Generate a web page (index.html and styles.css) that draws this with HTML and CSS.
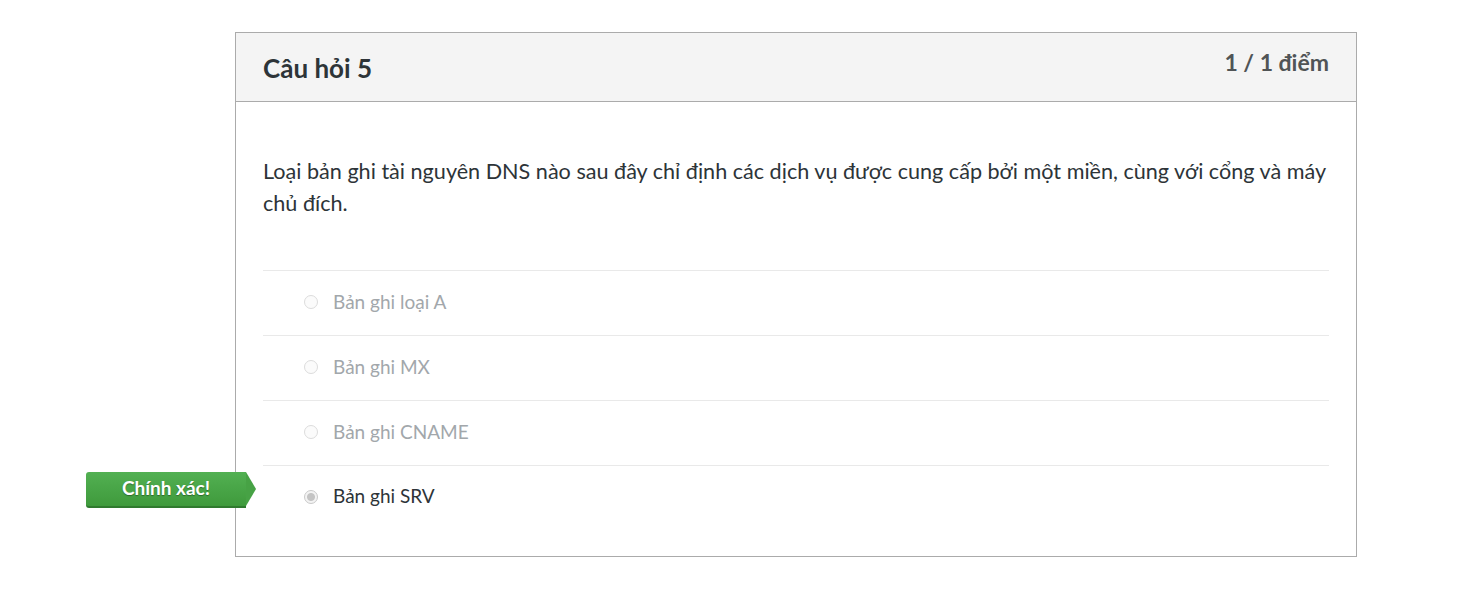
FILE: index.html
```html
<!DOCTYPE html>
<html lang="vi">
<head>
<meta charset="utf-8">
<title>Câu hỏi 5</title>
<link rel="stylesheet" href="styles.css">
</head>
<body>
<div class="page">
  <section class="card">
    <header class="card-head">
      <h2 class="title">Câu hỏi 5</h2>
      <div class="points">1 / 1 điểm</div>
    </header>
    <div class="card-body">
      <p class="question">Loại bản ghi tài nguyên DNS nào sau đây chỉ định các dịch vụ được cung cấp bởi một miền, cùng với cổng và máy chủ đích.</p>
      <ul class="answers">
        <li class="answer"><span class="radio"></span><span class="label">Bản ghi loại A</span></li>
        <li class="answer"><span class="radio"></span><span class="label">Bản ghi MX</span></li>
        <li class="answer"><span class="radio"></span><span class="label">Bản ghi CNAME</span></li>
        <li class="answer selected">
          <span class="badge">Chính xác!</span>
          <span class="radio checked"></span><span class="label">Bản ghi SRV</span>
        </li>
      </ul>
    </div>
  </section>
</div>
</body>
</html>
```
FILE: styles.css
```css
html, body {
  margin: 0;
  padding: 0;
  background: #fff;
  font-family: Lato, "Noto Sans", "Liberation Sans", sans-serif;
  color: #2d3438;
}
.page {
  padding: 32px 0 0 235px;
}
.card {
  width: 1120px;
  border: 1px solid #ababab;
  background: #fff;
}
.card-head {
  display: flex;
  justify-content: space-between;
  align-items: flex-start;
  background: #f4f4f4;
  border-bottom: 1px solid #ababab;
  height: 68px;
  padding: 0 27px;
}
.title {
  margin: 0;
  font-size: 26px;
  font-weight: 700;
  line-height: 30px;
  padding-top: 20px;
  color: #2d3438;
}
.points {
  font-size: 23px;
  font-weight: 700;
  line-height: 24px;
  padding-top: 17px;
  color: #505456;
}
.card-body {
  padding: 53px 27px 27px;
}
.question {
  margin: 0 0 51px;
  font-size: 21.6px;
  line-height: 32px;
  color: #2d3438;
}
.answers {
  list-style: none;
  margin: 0;
  padding: 0;
}
.answer {
  position: relative;
  display: flex;
  align-items: center;
  height: 64px;
  box-sizing: content-box;
  border-top: 1px solid #e9e9e9;
  padding-left: 41px;
}
.answer:last-child {
  height: 63px;
}
.radio {
  width: 14px;
  height: 14px;
  box-sizing: border-box;
  border-radius: 50%;
  border: 1px solid #dcdcdc;
  background: #fbfbfb;
  margin-right: 15px;
  margin-bottom: 2px;
}
.radio.checked {
  border: 1px solid #c9c9c9;
  background: radial-gradient(circle, #c4c4c4 0 3.5px, #f3f3f3 4.5px);
}
.label {
  font-size: 19px;
  line-height: 24px;
  margin-bottom: 3px;
  color: #a2a7ab;
}
.selected .label {
  color: #2d3438;
}
.badge {
  position: absolute;
  left: -177px;
  top: 6px;
  width: 160px;
  height: 36px;
  box-sizing: border-box;
  display: flex;
  align-items: center;
  justify-content: center;
  padding-bottom: 3px;
  color: #fff;
  font-size: 19px;
  font-weight: 700;
  text-shadow: 0 1px 1px rgba(0,0,0,0.35);
  background: linear-gradient(#52b052, #3f9a3c);
  border-bottom: 2px solid #2f7a2e;
  border-radius: 3px 0 0 3px;
}
.badge::after {
  content: "";
  position: absolute;
  right: -10px;
  top: 0;
  border-top: 17px solid transparent;
  border-bottom: 17px solid transparent;
  border-left: 10px solid #47a245;
}
```
